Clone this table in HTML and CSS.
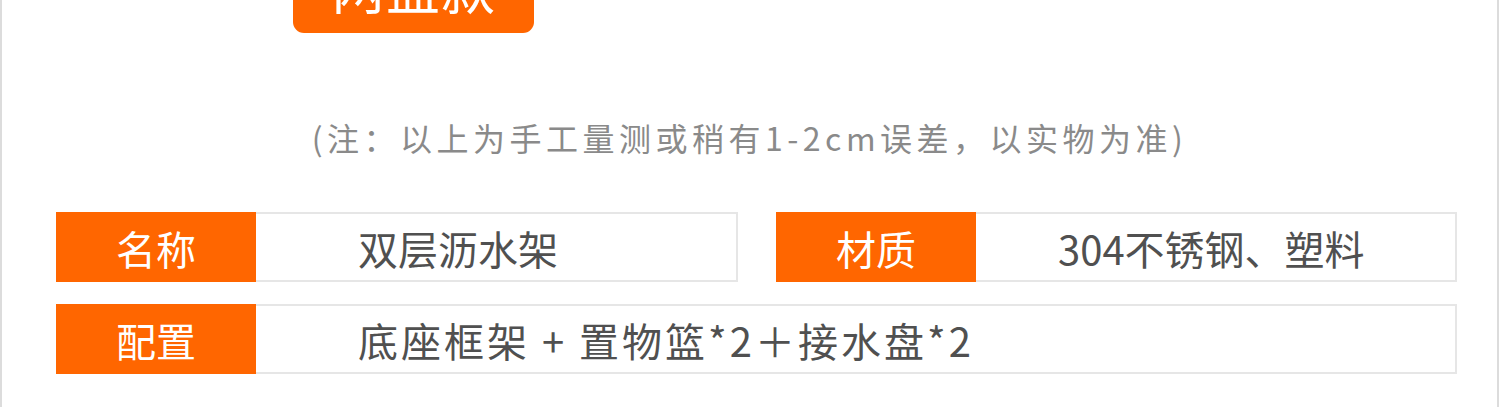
FILE: index.html
```html
<!DOCTYPE html>
<html lang="zh">
<head>
<meta charset="utf-8">
<link rel="stylesheet" href="styles.css">
</head>
<body>
<div class="frame">
  <div class="btn-row"><div class="btn">两盘款</div></div>
  <p class="note">(注：以上为手工量测或稍有1-2cm误差，以实物为准)</p>
  <div class="specs">
    <div class="spec"><div class="label">名称</div><div class="value v-left">双层沥水架</div></div>
    <div class="spec"><div class="label">材质</div><div class="value v-mid">304不锈钢、塑料</div></div>
    <div class="spec wide"><div class="label">配置</div><div class="value v-left v-wide">底座框架 + 置物篮*2＋接水盘*2</div></div>
  </div>
</div>
</body>
</html>
```
FILE: styles.css
```css
html, body { margin: 0; padding: 0; background: #fff; }
body { font-family: "Noto Sans CJK SC", "Noto Sans", sans-serif; }
.frame {
  width: 1499px;
  height: 407px;
  box-sizing: border-box;
  border-left: 2px solid #dcdcdc;
  border-right: 2px solid #dcdcdc;
  overflow: hidden;
}
.btn-row { padding-left: 291px; }
.btn {
  width: 241px;
  height: 81px;
  margin-top: -48px;
  background: #ff6600;
  border-radius: 11px;
  color: #fff;
  font-size: 54px;
  font-weight: 400;
  line-height: 70px;
  text-align: center;
  letter-spacing: 1px;
}
.note {
  margin: 84px 0 0;
  text-align: center;
  color: #8a8a8a;
  font-size: 32px;
  line-height: 40px;
  letter-spacing: 4.5px;
}
.specs {
  display: grid;
  grid-template-columns: 682px 681px;
  column-gap: 38px;
  row-gap: 22px;
  padding-left: 54px;
  margin-top: 55px;
}
.spec {
  display: flex;
  height: 70px;
  box-sizing: border-box;
  border: 2px solid #e6e6e6;
}
.spec.wide { grid-column: 1 / 3; }
.label {
  width: 200px;
  margin: -2px 0 -2px -2px;
  background: #ff6600;
  color: #fff;
  font-size: 40px;
  line-height: 72px;
  text-align: center;
  flex: none;
}
.value {
  color: #505050;
  font-size: 40px;
  line-height: 68px;
  white-space: nowrap;
}
.v-left { padding-left: 102px; }
.v-mid { padding-left: 82px; }
.v-wide { letter-spacing: 3px; }
```
